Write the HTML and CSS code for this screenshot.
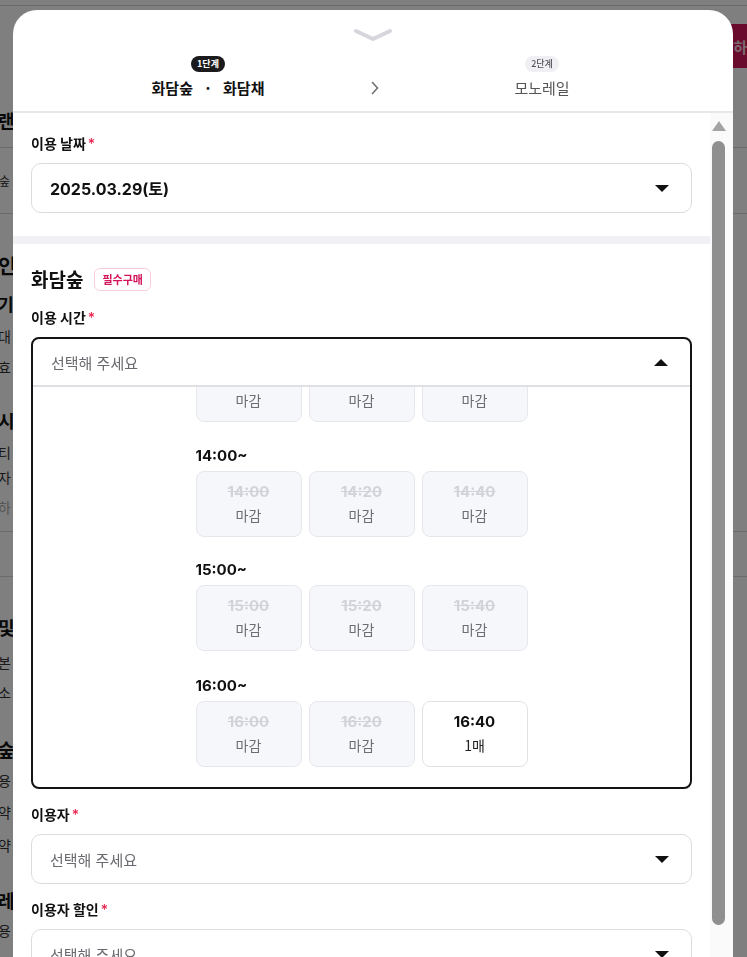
FILE: index.html
```html
<!DOCTYPE html>
<html lang="ko">
<head>
<meta charset="utf-8">
<title>예매</title>
<link rel="stylesheet" href="styles.css">
</head>
<body>
<div class="bg-page">
  <div class="bg-top"></div>
  <div class="bg-bar"><span class="bg-btn">바로 예매하기</span></div>
  <div class="bg-list">
    <div class="sp h32"></div>
    <div class="it b18 h40">랜</div>
    <div class="ln h8"></div>
    <div class="it s12 h66 lnb">숲</div>
    <div class="sp h31"></div>
    <div class="it b20 h40">인</div>
    <div class="it b17 h36">기</div>
    <div class="it r14 h30">대</div>
    <div class="it r14 h32">효</div>
    <div class="sp h17"></div>
    <div class="it b18 h40">시</div>
    <div class="it r14 h24">티</div>
    <div class="it r14 h26">자</div>
    <div class="it r14 fade h34">하</div>
    <div class="ln h8"></div>
    <div class="ln h45"></div>
    <div class="sp h30"></div>
    <div class="it b18 h40">및</div>
    <div class="it r14 h30">본</div>
    <div class="it r14 h30">소</div>
    <div class="sp h22"></div>
    <div class="it b18 h40">숲</div>
    <div class="it r14 h22">용</div>
    <div class="it r14 h42">약</div>
    <div class="it r14 h24">약</div>
    <div class="sp h23"></div>
    <div class="it b18 h40">레</div>
    <div class="it r14 h20">용</div>
  </div>
</div>
<div class="overlay"></div>

<div class="modal">
  <div class="modal-head">
    <svg class="handle" width="40" height="14" viewBox="0 0 40 14"><path d="M3 3 L20 11 L37 3" fill="none" stroke="#d6d6dc" stroke-width="4" stroke-linecap="round" stroke-linejoin="round"/></svg>
    <div class="steps">
      <div class="step">
        <span class="pill pill-on">1단계</span>
        <span class="step-title on">화담숲 &nbsp;&nbsp;·&nbsp;&nbsp; 화담채</span>
      </div>
      <svg class="step-arrow" width="10" height="14" viewBox="0 0 10 14"><path d="M2.5 1.5 L7.5 7 L2.5 12.5" fill="none" stroke="#6f6f75" stroke-width="1.6" stroke-linecap="round" stroke-linejoin="round"/></svg>
      <div class="step">
        <span class="pill">2단계</span>
        <span class="step-title">모노레일</span>
      </div>
    </div>
  </div>

  <div class="modal-body">
    <div class="main">
      <div class="section first">
        <div class="label">이용 날짜<span class="req">*</span></div>
        <div class="select">
          <span class="value">2025.03.29(토)</span>
          <span class="caret down"></span>
        </div>
      </div>
      <div class="band"></div>
      <div class="section second">
        <div class="sec-title">화담숲 <span class="badge">필수구매</span></div>
        <div class="label gap">이용 시간<span class="req">*</span></div>
        <div class="select-open">
          <div class="open-head">
            <span class="placeholder">선택해 주세요</span>
            <span class="caret up"></span>
          </div>
          <div class="open-list">
            <div class="list-inner">
              <div class="slots first-row">
                <div class="slot off"><span class="t">13:40</span><span class="s">마감</span></div>
                <div class="slot off"><span class="t">13:40</span><span class="s">마감</span></div>
                <div class="slot off"><span class="t">13:40</span><span class="s">마감</span></div>
              </div>
              <div class="group">
                <div class="group-label">14:00~</div>
                <div class="slots">
                  <div class="slot off"><span class="t">14:00</span><span class="s">마감</span></div>
                  <div class="slot off"><span class="t">14:20</span><span class="s">마감</span></div>
                  <div class="slot off"><span class="t">14:40</span><span class="s">마감</span></div>
                </div>
              </div>
              <div class="group">
                <div class="group-label">15:00~</div>
                <div class="slots">
                  <div class="slot off"><span class="t">15:00</span><span class="s">마감</span></div>
                  <div class="slot off"><span class="t">15:20</span><span class="s">마감</span></div>
                  <div class="slot off"><span class="t">15:40</span><span class="s">마감</span></div>
                </div>
              </div>
              <div class="group">
                <div class="group-label">16:00~</div>
                <div class="slots">
                  <div class="slot off"><span class="t">16:00</span><span class="s">마감</span></div>
                  <div class="slot off"><span class="t">16:20</span><span class="s">마감</span></div>
                  <div class="slot on"><span class="t">16:40</span><span class="s">1매</span></div>
                </div>
              </div>
            </div>
          </div>
        </div>
        <div class="label gap">이용자<span class="req">*</span></div>
        <div class="select">
          <span class="placeholder">선택해 주세요</span>
          <span class="caret down"></span>
        </div>
        <div class="label gap">이용자 할인<span class="req">*</span></div>
        <div class="select">
          <span class="placeholder">선택해 주세요</span>
          <span class="caret down"></span>
        </div>
      </div>
    </div>
    <div class="scrollbar">
      <span class="sb-up"></span>
      <span class="sb-thumb"></span>
    </div>
  </div>
</div>
</body>
</html>
```

FILE: styles.css
```css
* { box-sizing: border-box; }
html, body { margin: 0; padding: 0; }
body {
  width: 747px;
  height: 957px;
  overflow: hidden;
  font-family: Inter, "Noto Sans CJK KR", sans-serif;
  color: #111;
  background: #fff;
}

/* background page */
.bg-page { width: 747px; height: 957px; overflow: hidden; }
.bg-top { height: 6px; border-bottom: 1px solid #d2d2d2; }
.bg-bar { height: 62px; display: flex; justify-content: flex-end; padding-top: 18px; }
.bg-btn {
  height: 44px;
  width: 150px;
  margin-right: -40px;
  background: #d5145a;
  color: #f4cfdc;
  font-weight: 700;
  font-size: 15px;
  display: flex;
  align-items: center;
  justify-content: flex-end;
  padding-right: 26px;
  font-family: "Noto Sans CJK KR", sans-serif;
}
.bg-list { display: flex; flex-direction: column; }
.bg-list .it { margin-left: -2px; font-family: "Noto Sans CJK KR", sans-serif; color: #333; display: flex; align-items: center; }
.bg-list .b18 { font-size: 18px; font-weight: 700; color: #111; }
.bg-list .b20 { font-size: 20px; font-weight: 700; color: #111; }
.bg-list .b17 { font-size: 17px; font-weight: 700; color: #111; }
.bg-list .r14 { font-size: 14px; }
.bg-list .s12 { font-size: 12px; margin-left: -1px; }
.bg-list .fade { color: #aaa; }
.bg-list .ln, .bg-list .lnb { border-bottom: 1px solid #d6d6d6; }
.h8 { height: 8px; } .h17 { height: 17px; } .h20 { height: 20px; } .h22 { height: 22px; }
.h23 { height: 23px; } .h24 { height: 24px; } .h26 { height: 26px; } .h30 { height: 30px; }
.h31 { height: 31px; } .h32 { height: 32px; } .h34 { height: 34px; } .h36 { height: 36px; }
.h40 { height: 40px; } .h42 { height: 42px; } .h45 { height: 45px; } .h66 { height: 66px; }
.sp { flex: none; }

.overlay {
  position: fixed;
  inset: 0;
  background: rgba(0, 0, 0, 0.5);
}

/* modal */
.modal {
  position: fixed;
  left: 13px;
  top: 10px;
  width: 720px;
  height: 960px;
  background: #fff;
  border-radius: 24px 24px 0 0;
  display: flex;
  flex-direction: column;
  overflow: hidden;
}
.modal-head {
  display: flex;
  flex-direction: column;
  align-items: center;
  padding: 18px 0 13px;
  border-bottom: 2px solid #e7e7ec;
}
.handle { display: block; }
.steps {
  margin-top: 14px;
  display: flex;
  align-items: flex-end;
  gap: 62px;
  padding-left: 4px;
}
.step {
  width: 200px;
  display: flex;
  flex-direction: column;
  align-items: center;
  gap: 6px;
}
.pill {
  height: 16px;
  padding: 0 6px;
  border-radius: 8px;
  background: #f0f0f4;
  color: #555;
  font-size: 9px;
  line-height: 16px;
  font-family: "Noto Sans CJK KR", sans-serif;
  font-weight: 500;
}
.pill-on { background: #1b1b1d; color: #fff; font-weight: 700; }
.step-title {
  font-size: 15px;
  line-height: 20px;
  color: #555;
  font-family: "Noto Sans CJK KR", sans-serif;
}
.step-title.on { color: #111; font-weight: 700; }
.step-arrow { display: block; margin-bottom: 3px; }

.modal-body { flex: 1; display: flex; min-height: 0; }
.main { width: 697px; overflow: hidden; }
.section { padding: 0 18px; }
.section.first { padding-top: 21px; padding-bottom: 23px; }
.section.second { padding-top: 22px; }
.band { height: 8px; background: #f1f1f5; }

.label {
  font-size: 14px;
  line-height: 20px;
  font-weight: 700;
  color: #111;
  font-family: Inter, "Noto Sans CJK KR", sans-serif;
  display: flex;
  align-items: flex-start;
}
.label.gap { margin-top: 16px; }
.req { color: #e8264f; font-size: 14px; line-height: 14px; margin-left: 2px; margin-top: 3px; font-weight: 500; }

.select {
  margin-top: 9px;
  height: 50px;
  border: 1px solid #dcdce0;
  border-radius: 10px;
  display: flex;
  align-items: center;
  justify-content: space-between;
  padding: 0 22px 0 18px;
}
.value { font-size: 16px; font-weight: 700; color: #111; }
.placeholder { font-size: 15px; color: #6a6a70; font-family: "Noto Sans CJK KR", sans-serif; }
.caret { width: 0; height: 0; border-left: 7px solid transparent; border-right: 7px solid transparent; }
.caret.down { border-top: 7px solid #111; }
.caret.up { border-bottom: 7px solid #111; }

.sec-title {
  font-size: 19px;
  line-height: 26px;
  font-weight: 700;
  display: flex;
  align-items: center;
  font-family: "Noto Sans CJK KR", sans-serif;
}
.badge {
  margin-left: 11px;
  height: 23px;
  padding: 0 7px;
  border: 1px solid #f8cddb;
  border-radius: 6px;
  color: #d4145a;
  font-size: 11px;
  font-weight: 700;
  display: flex;
  align-items: center;
}

.select-open {
  margin-top: 9px;
  height: 452px;
  border: 2px solid #141414;
  border-radius: 8px;
  display: flex;
  flex-direction: column;
  overflow: hidden;
}
.open-head {
  height: 48px;
  flex: none;
  display: flex;
  align-items: center;
  justify-content: space-between;
  padding: 0 22px 0 18px;
  border-bottom: 2px solid #e0e0e4;
}
.open-list { flex: 1; overflow: hidden; }
.list-inner {
  width: 332px;
  margin: -31px auto 0;
}
.slots { display: grid; grid-template-columns: repeat(3, 106px); gap: 7px; }
.group { margin-top: 24px; }
.group + .group { margin-top: 23px; }
.group:last-child { margin-top: 25px; }
.group-label {
  font-size: 15px;
  line-height: 20px;
  font-weight: 700;
  color: #111;
  margin-bottom: 5px;
}
.slot {
  height: 66px;
  border-radius: 8px;
  border: 1px solid #e6e7ec;
  background: #f6f7fa;
  display: flex;
  flex-direction: column;
  align-items: center;
  padding-top: 10px;
}
.slot .t { font-size: 15px; line-height: 20px; font-weight: 700; color: #d2d3d8; text-decoration: line-through; }
.slot .s { font-size: 14px; line-height: 20px; margin-top: 3px; color: #6d6d73; font-family: "Noto Sans CJK KR", sans-serif; }
.slot.on { background: #fff; border-color: #e2e2e6; }
.slot.on .t { color: #111; text-decoration: none; }
.slot.on .s { color: #222; }

.scrollbar {
  width: 23px;
  background: #fafafa;
  display: flex;
  flex-direction: column;
  align-items: flex-start;
  padding: 8px 0 0 2px;
}
.sb-up {
  width: 0; height: 0;
  border-left: 7px solid transparent;
  border-right: 7px solid transparent;
  border-bottom: 10px solid #a3a3a3;
}
.sb-thumb {
  margin-top: 10px;
  width: 13px;
  height: 784px;
  border-radius: 7px;
  background: #8f8f8f;
}
```
